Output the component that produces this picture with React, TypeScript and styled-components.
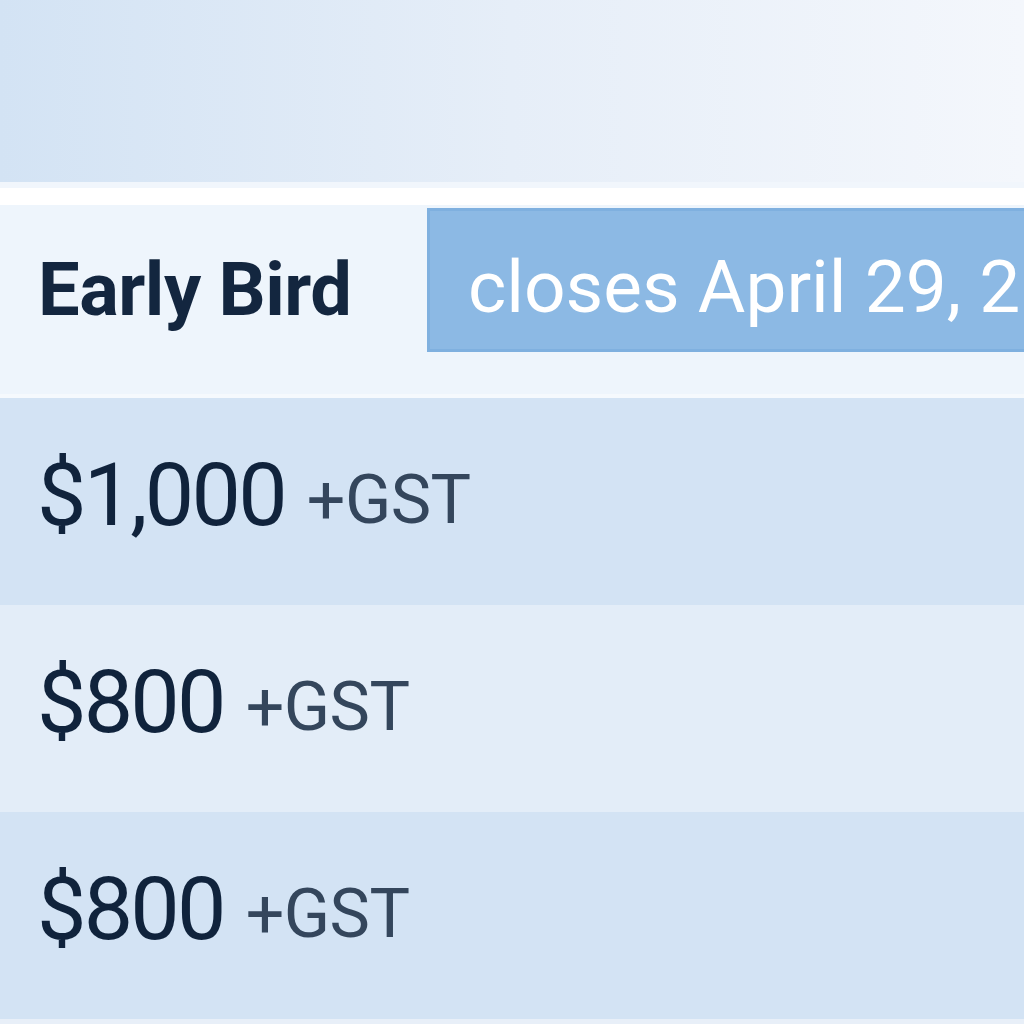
import * as React from 'react'
import styled, { createGlobalStyle } from 'styled-components'

const GlobalStyle = createGlobalStyle`
  html, body {
    margin: 0;
    padding: 0;
    background: #e6eef8;
  }
  body {
    width: 1024px;
    height: 1024px;
    overflow: hidden;
    font-family: Roboto, "Liberation Sans", Arial, sans-serif;
  }
`

// Outer frame for the whole pricing card
const Card = styled.div`
  width: 1024px;
  height: 1024px;
  display: flex;
  flex-direction: column;
  overflow: hidden;
  background: #e8eff8;
`

const Banner = styled.div`
  height: 182px;
  flex: none;
  background: linear-gradient(90deg, #d3e3f4 0%, #e6eef8 50%, #f4f7fc 100%);
`

const Divider = styled.div`
  flex: none;
  height: 23px;
  background: #ffffff;
  border-top: 6px solid #f1f6fc;
  box-sizing: border-box;
`

const HeaderRow = styled.div`
  flex: none;
  height: 193px;
  display: flex;
  align-items: flex-start;
  background: #eef5fc;
  border-bottom: 4px solid #f5f9fd;
  box-sizing: border-box;
`

const TierName = styled.div`
  width: 427px;
  flex: none;
  height: 147px;
  box-sizing: border-box;
  padding-left: 38px;
  display: flex;
  align-items: center;
  padding-top: 22px;
  font-size: 74px;
  font-weight: 700;
  color: #13263f;
  letter-spacing: -0.5px;
  white-space: nowrap;
`

// Closing date tag, runs off the right edge like the original crop
const Badge = styled.div`
  flex: 1;
  min-width: 0;
  margin-top: 3px;
  height: 144px;
  box-sizing: border-box;
  display: flex;
  align-items: center;
  padding-left: 38px;
  padding-top: 14px;
  background: #8cb9e4;
  border: 3px solid #7fb0df;
  border-right: none;
  color: #ffffff;
  font-size: 73px;
  font-weight: 400;
  white-space: nowrap;
  overflow: hidden;
`

type PriceRowProps = {
  $shade: 'dark' | 'light'
}

const PriceRow = styled.div<PriceRowProps>`
  flex: none;
  height: 207px;
  display: flex;
  align-items: center;
  box-sizing: border-box;
  padding-left: 37px;
  padding-bottom: 14px;
  background: ${props => props.$shade === 'dark' ? '#d3e3f4' : '#e3edf8'};
  white-space: nowrap;
`

const Amount = styled.span`
  font-size: 88px;
  font-weight: 400;
  color: #10233c;
  letter-spacing: -2.8px;
`

const Tax = styled.span`
  font-size: 68px;
  font-weight: 400;
  color: #34465c;
  margin-left: 22px;
  margin-top: 10px;
  letter-spacing: -0.5px;
`

const prices = [
  { amount: '$1,000', shade: 'dark' as const },
  { amount: '$800', shade: 'light' as const },
  { amount: '$800', shade: 'dark' as const },
]

export default function App() {
  return (
    <Card>
      <GlobalStyle />
      <Banner />
      <Divider />
      <HeaderRow>
        <TierName>Early Bird</TierName>
        <Badge>closes April 29, 2019</Badge>
      </HeaderRow>
      {prices.map((p, i) => (
        <PriceRow key={i} $shade={p.shade}>
          <Amount>{p.amount}</Amount>
          <Tax>+GST</Tax>
        </PriceRow>
      ))}
    </Card>
  )
}
